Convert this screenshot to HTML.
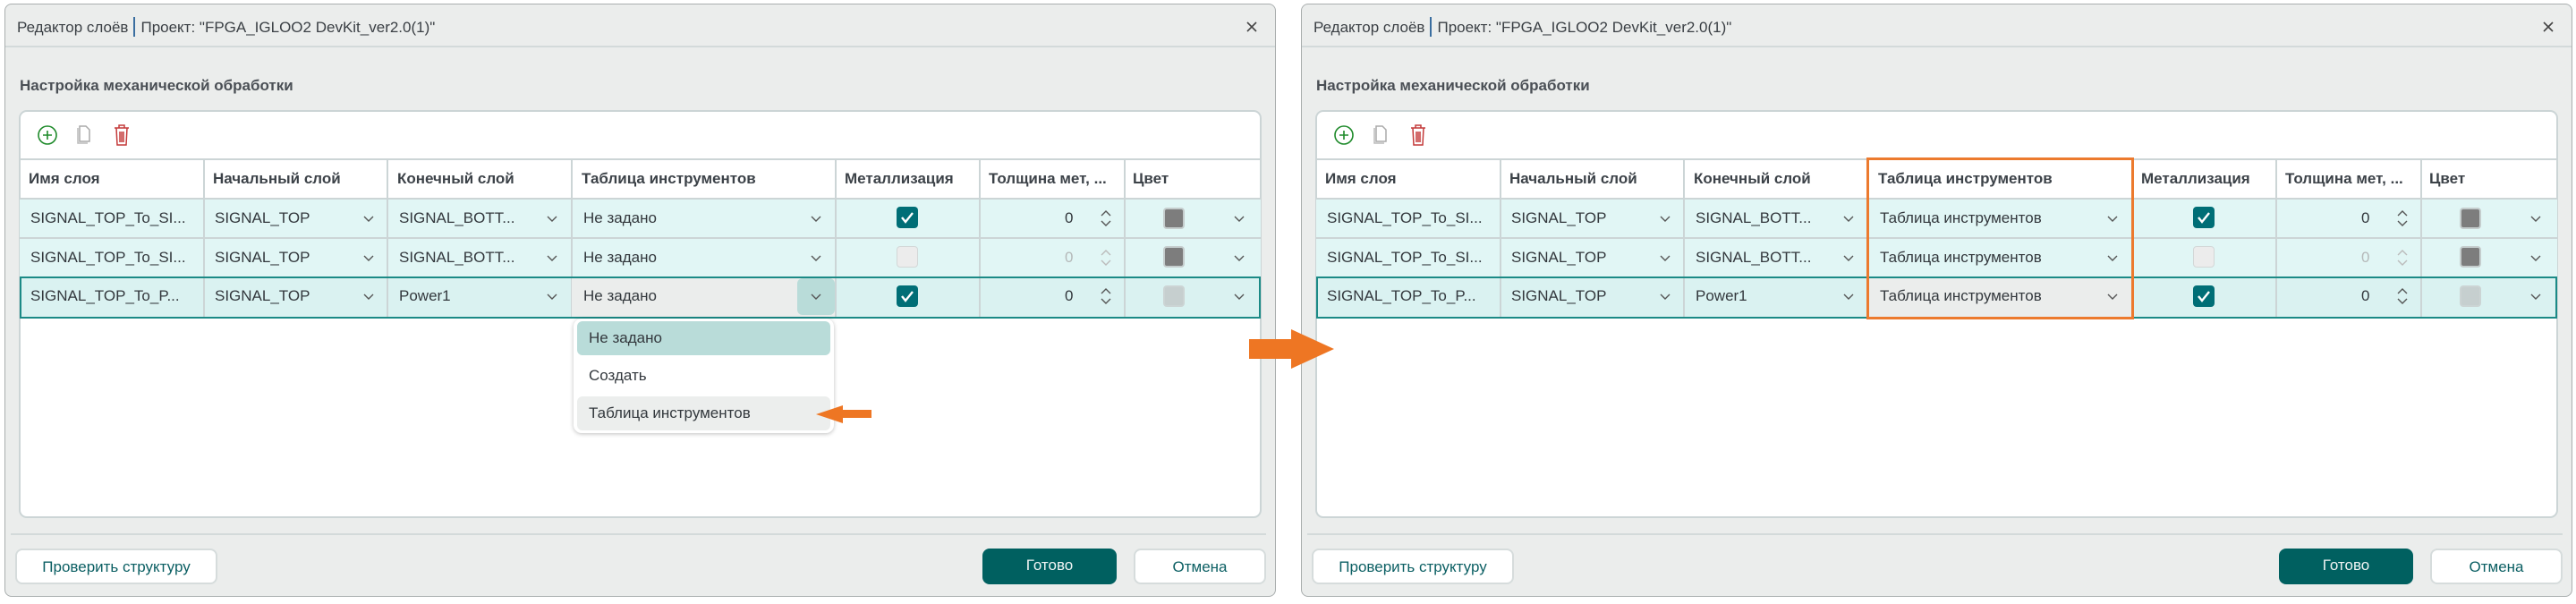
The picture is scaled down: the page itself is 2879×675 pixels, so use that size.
<!DOCTYPE html>
<html><head><meta charset="utf-8">
<style>
*{box-sizing:border-box;margin:0;padding:0}
body{width:2879px;height:675px;background:#fff;position:relative;overflow:hidden;font-family:"Liberation Sans","Noto Sans CJK SC",sans-serif;color:#33383d}
.d{position:absolute;top:0;width:1440px;height:675px}
.a{position:absolute}
.dlg{left:5px;top:4px;width:1421px;height:663px;background:#ebedec;border:1px solid #a9aeae;border-radius:8px}
.tl{left:19px;top:19px;font-size:17px;color:#3a3f44;white-space:nowrap}
.tl span{display:inline-block;width:2px;height:22px;background:#3a6ea0;vertical-align:-5px;margin:0 6px}
.hl{left:6px;top:51px;width:1419px;height:2px;background:#d3dada}
.h2{left:22px;top:86px;font-size:17px;font-weight:bold;color:#4a4f55}
.pn{left:21px;top:123px;width:1389px;height:456px;background:#fff;border:2px solid #ccd5d6;border-radius:9px}
.hr{top:177px;height:2px;background:#ccd5d6}
.cell{position:absolute;font-size:17px;white-space:nowrap;line-height:20px}
.hd{font-weight:bold;color:#3c4248}
.row{position:absolute;left:22px;width:1387px;background:#e1f6f5}
.vl{position:absolute;width:2px;background:#ccd5d6}
.hz{position:absolute;height:2px;background:#ccd5d6;left:22px;width:1387px}
.ch{position:absolute;width:14px;height:8px}
.cb{position:absolute;width:24px;height:24px;border-radius:4px;background:#006e76}
.cb.off{background:#ececec;border:1px solid #d3d7d7}
.sw{position:absolute;width:24px;height:24px;border-radius:4px;background:#7d7d7d;border:2px solid #c5cdcd}
.btn{position:absolute;top:613px;height:40px;border-radius:8px;font-size:17px;text-align:center;line-height:38px}
.ft{left:12px;top:596px;width:1403px;height:2px;background:#d3dada}
</style></head><body>

<!-- LEFT DIALOG -->
<div class="d" style="left:0">
<div class="a dlg"></div>
<div class="a tl">Редактор слоёв<span></span>Проект: "FPGA_IGLOO2 DevKit_ver2.0(1)"</div>
<svg class="a" style="left:1392px;top:23px" width="14" height="14"><path d="M2 2L12 12M12 2L2 12" stroke="#444" stroke-width="1.6"/></svg>
<div class="a hl"></div>
<div class="a h2">Настройка механической обработки</div>
<div class="a pn"></div>
<svg class="a" style="left:41px;top:139px" width="24" height="24"><circle cx="12" cy="12" r="10" fill="none" stroke="#1e8a2a" stroke-width="1.6"/><path d="M12 7v10M7 12h10" stroke="#1e8a2a" stroke-width="1.6"/></svg>
<svg class="a" style="left:84px;top:139px" width="20" height="24"><path d="M3 4v17h11" fill="none" stroke="#bbb" stroke-width="1.5"/><path d="M5 2h7l4 4v13H5z" fill="#fff" stroke="#aaa" stroke-width="1.5"/></svg>
<svg class="a" style="left:126px;top:138px" width="20" height="26"><path d="M2 5h16M7 5V2h6v3M4 5l1 19h10l1-19M8 9v12M10 9v12M12 9v12" fill="none" stroke="#c43a3a" stroke-width="1.5"/></svg>
<!-- table -->
<div class="hz" style="top:177px"></div>
<div class="row" style="top:223px;height:44px"></div>
<div class="row" style="top:267px;height:43px"></div>
<div class="row" style="top:310px;height:45px;background:#daf2f1"></div>
<div class="hz" style="top:221px"></div>
<div class="hz" style="top:265px"></div>
<div class="vl" style="left:227px;top:177px;height:178px"></div>
<div class="vl" style="left:432px;top:177px;height:178px"></div>
<div class="vl" style="left:638px;top:177px;height:178px"></div>
<div class="vl" style="left:933px;top:177px;height:178px"></div>
<div class="vl" style="left:1094px;top:177px;height:178px"></div>
<div class="vl" style="left:1256px;top:177px;height:178px"></div>
<div class="a" style="left:639px;top:311px;width:294px;height:43px;background:#ebedec"></div>
<div class="a" style="left:891px;top:311px;width:42px;height:41px;background:#b9dcd9;border-radius:6px"></div>
<div class="a" style="left:22px;top:309px;width:1387px;height:47px;border:2px solid #1b8a86"></div>
<div class="cell hd" style="left:32px;top:190px">Имя слоя</div>
<div class="cell hd" style="left:238px;top:190px">Начальный слой</div>
<div class="cell hd" style="left:444px;top:190px">Конечный слой</div>
<div class="cell hd" style="left:650px;top:190px">Таблица инструментов</div>
<div class="cell hd" style="left:944px;top:190px">Металлизация</div>
<div class="cell hd" style="left:1105px;top:190px">Толщина мет, ...</div>
<div class="cell hd" style="left:1266px;top:190px">Цвет</div>

<div class="cell" style="left:34px;top:234px">SIGNAL_TOP_To_SI...</div>
<div class="cell" style="left:34px;top:278px">SIGNAL_TOP_To_SI...</div>
<div class="cell" style="left:34px;top:321px">SIGNAL_TOP_To_P...</div>
<div class="cell" style="left:240px;top:234px">SIGNAL_TOP</div>
<div class="cell" style="left:240px;top:278px">SIGNAL_TOP</div>
<div class="cell" style="left:240px;top:321px">SIGNAL_TOP</div>
<div class="cell" style="left:446px;top:234px">SIGNAL_BOTT...</div>
<div class="cell" style="left:446px;top:278px">SIGNAL_BOTT...</div>
<div class="cell" style="left:446px;top:321px">Power1</div>
<div class="cell" style="left:652px;top:234px">Не задано</div>
<div class="cell" style="left:652px;top:278px">Не задано</div>
<div class="cell" style="left:652px;top:321px">Не задано</div>
<svg class="ch" style="left:405px;top:241px"><path d="M2 1l5 5 5-5" fill="none" stroke="#555" stroke-width="1.4"/></svg>
<svg class="ch" style="left:405px;top:285px"><path d="M2 1l5 5 5-5" fill="none" stroke="#555" stroke-width="1.4"/></svg>
<svg class="ch" style="left:405px;top:328px"><path d="M2 1l5 5 5-5" fill="none" stroke="#555" stroke-width="1.4"/></svg>
<svg class="ch" style="left:610px;top:241px"><path d="M2 1l5 5 5-5" fill="none" stroke="#555" stroke-width="1.4"/></svg>
<svg class="ch" style="left:610px;top:285px"><path d="M2 1l5 5 5-5" fill="none" stroke="#555" stroke-width="1.4"/></svg>
<svg class="ch" style="left:610px;top:328px"><path d="M2 1l5 5 5-5" fill="none" stroke="#555" stroke-width="1.4"/></svg>
<svg class="ch" style="left:905px;top:241px"><path d="M2 1l5 5 5-5" fill="none" stroke="#555" stroke-width="1.4"/></svg>
<svg class="ch" style="left:905px;top:285px"><path d="M2 1l5 5 5-5" fill="none" stroke="#555" stroke-width="1.4"/></svg>
<svg class="ch" style="left:905px;top:328px"><path d="M2 1l5 5 5-5" fill="none" stroke="#555" stroke-width="1.4"/></svg>
<div class="cb" style="left:1002px;top:231px"></div>
<svg class="a" style="left:1002px;top:231px" width="24" height="24"><path d="M6 12l4 5 8-10" fill="none" stroke="#fff" stroke-width="2.4"/></svg>
<div class="cb off" style="left:1002px;top:275px"></div>
<div class="cb" style="left:1002px;top:319px"></div>
<svg class="a" style="left:1002px;top:319px" width="24" height="24"><path d="M6 12l4 5 8-10" fill="none" stroke="#fff" stroke-width="2.4"/></svg>
<div class="cell" style="left:1190px;top:234px">0</div>
<div class="cell" style="left:1190px;top:278px;color:#b5b9b9">0</div>
<div class="cell" style="left:1190px;top:321px">0</div>
<svg class="a" style="left:1228px;top:233px" width="16" height="22"><path d="M3 8l5-5 5 5M3 14l5 5 5-5" fill="none" stroke="#555" stroke-width="1.4"/></svg>
<svg class="a" style="left:1228px;top:277px" width="16" height="22"><path d="M3 8l5-5 5 5M3 14l5 5 5-5" fill="none" stroke="#bbb" stroke-width="1.4"/></svg>
<svg class="a" style="left:1228px;top:320px" width="16" height="22"><path d="M3 8l5-5 5 5M3 14l5 5 5-5" fill="none" stroke="#555" stroke-width="1.4"/></svg>
<div class="sw" style="left:1300px;top:232px"></div>
<div class="sw" style="left:1300px;top:275px"></div>
<div class="sw" style="left:1300px;top:319px;background:#c6cfcf;border-color:#ccd4d4"></div>
<svg class="ch" style="left:1378px;top:241px"><path d="M2 1l5 5 5-5" fill="none" stroke="#555" stroke-width="1.4"/></svg>
<svg class="ch" style="left:1378px;top:285px"><path d="M2 1l5 5 5-5" fill="none" stroke="#555" stroke-width="1.4"/></svg>
<svg class="ch" style="left:1378px;top:328px"><path d="M2 1l5 5 5-5" fill="none" stroke="#555" stroke-width="1.4"/></svg>
<!-- dropdown -->
<div class="a" style="left:641px;top:356px;width:291px;height:128px;background:#fff;border-radius:9px;box-shadow:0 1px 5px rgba(0,0,0,.25)"></div>
<div class="a" style="left:645px;top:359px;width:283px;height:38px;background:#b9dcd9;border-radius:6px"></div>
<div class="a" style="left:645px;top:443px;width:283px;height:38px;background:#eceeed;border-radius:6px"></div>
<div class="cell" style="left:658px;top:368px">Не задано</div>
<div class="cell" style="left:658px;top:410px">Создать</div>
<div class="cell" style="left:658px;top:452px">Таблица инструментов</div>
<svg class="a" style="left:910px;top:450px" width="66" height="26"><path d="M2 13L32 3V8H64V17H32V23Z" fill="#ee7623"/></svg>
<!-- footer -->
<div class="a ft"></div>
<div class="btn" style="left:17px;width:226px;background:#fff;border:2px solid #d6dcdc;color:#0b5f63">Проверить структуру</div>
<div class="btn" style="left:1098px;width:150px;background:#006060;color:#f0f4f4">Готово</div>
<div class="btn" style="left:1267px;width:148px;background:#fff;border:2px solid #d6dcdc;color:#0b5f63">Отмена</div>
</div>

<!-- RIGHT DIALOG -->
<div class="d" style="left:1449px">
<div class="a dlg"></div>
<div class="a tl">Редактор слоёв<span></span>Проект: "FPGA_IGLOO2 DevKit_ver2.0(1)"</div>
<svg class="a" style="left:1392px;top:23px" width="14" height="14"><path d="M2 2L12 12M12 2L2 12" stroke="#444" stroke-width="1.6"/></svg>
<div class="a hl"></div>
<div class="a h2">Настройка механической обработки</div>
<div class="a pn"></div>
<svg class="a" style="left:41px;top:139px" width="24" height="24"><circle cx="12" cy="12" r="10" fill="none" stroke="#1e8a2a" stroke-width="1.6"/><path d="M12 7v10M7 12h10" stroke="#1e8a2a" stroke-width="1.6"/></svg>
<svg class="a" style="left:84px;top:139px" width="20" height="24"><path d="M3 4v17h11" fill="none" stroke="#bbb" stroke-width="1.5"/><path d="M5 2h7l4 4v13H5z" fill="#fff" stroke="#aaa" stroke-width="1.5"/></svg>
<svg class="a" style="left:126px;top:138px" width="20" height="26"><path d="M2 5h16M7 5V2h6v3M4 5l1 19h10l1-19M8 9v12M10 9v12M12 9v12" fill="none" stroke="#c43a3a" stroke-width="1.5"/></svg>
<div class="hz" style="top:177px"></div>
<div class="row" style="top:223px;height:44px"></div>
<div class="row" style="top:267px;height:43px"></div>
<div class="row" style="top:310px;height:45px;background:#daf2f1"></div>
<div class="hz" style="top:221px"></div>
<div class="hz" style="top:265px"></div>
<div class="vl" style="left:227px;top:177px;height:178px"></div>
<div class="vl" style="left:432px;top:177px;height:178px"></div>
<div class="vl" style="left:638px;top:177px;height:178px"></div>
<div class="vl" style="left:933px;top:177px;height:178px"></div>
<div class="vl" style="left:1094px;top:177px;height:178px"></div>
<div class="vl" style="left:1256px;top:177px;height:178px"></div>
<div class="a" style="left:639px;top:311px;width:294px;height:43px;background:#ebedec"></div>
<div class="a" style="left:22px;top:309px;width:1387px;height:47px;border:2px solid #1b8a86"></div>
<div class="a" style="left:637px;top:176px;width:299px;height:181px;border:3px solid #ec7a2e"></div>
<div class="cell hd" style="left:32px;top:190px">Имя слоя</div>
<div class="cell hd" style="left:238px;top:190px">Начальный слой</div>
<div class="cell hd" style="left:444px;top:190px">Конечный слой</div>
<div class="cell hd" style="left:650px;top:190px">Таблица инструментов</div>
<div class="cell hd" style="left:944px;top:190px">Металлизация</div>
<div class="cell hd" style="left:1105px;top:190px">Толщина мет, ...</div>
<div class="cell hd" style="left:1266px;top:190px">Цвет</div>
<div class="cell" style="left:34px;top:234px">SIGNAL_TOP_To_SI...</div>
<div class="cell" style="left:34px;top:278px">SIGNAL_TOP_To_SI...</div>
<div class="cell" style="left:34px;top:321px">SIGNAL_TOP_To_P...</div>
<div class="cell" style="left:240px;top:234px">SIGNAL_TOP</div>
<div class="cell" style="left:240px;top:278px">SIGNAL_TOP</div>
<div class="cell" style="left:240px;top:321px">SIGNAL_TOP</div>
<div class="cell" style="left:446px;top:234px">SIGNAL_BOTT...</div>
<div class="cell" style="left:446px;top:278px">SIGNAL_BOTT...</div>
<div class="cell" style="left:446px;top:321px">Power1</div>
<div class="cell" style="left:652px;top:234px">Таблица инструментов</div>
<div class="cell" style="left:652px;top:278px">Таблица инструментов</div>
<div class="cell" style="left:652px;top:321px">Таблица инструментов</div>
<svg class="ch" style="left:405px;top:241px"><path d="M2 1l5 5 5-5" fill="none" stroke="#555" stroke-width="1.4"/></svg>
<svg class="ch" style="left:405px;top:285px"><path d="M2 1l5 5 5-5" fill="none" stroke="#555" stroke-width="1.4"/></svg>
<svg class="ch" style="left:405px;top:328px"><path d="M2 1l5 5 5-5" fill="none" stroke="#555" stroke-width="1.4"/></svg>
<svg class="ch" style="left:610px;top:241px"><path d="M2 1l5 5 5-5" fill="none" stroke="#555" stroke-width="1.4"/></svg>
<svg class="ch" style="left:610px;top:285px"><path d="M2 1l5 5 5-5" fill="none" stroke="#555" stroke-width="1.4"/></svg>
<svg class="ch" style="left:610px;top:328px"><path d="M2 1l5 5 5-5" fill="none" stroke="#555" stroke-width="1.4"/></svg>
<svg class="ch" style="left:905px;top:241px"><path d="M2 1l5 5 5-5" fill="none" stroke="#555" stroke-width="1.4"/></svg>
<svg class="ch" style="left:905px;top:285px"><path d="M2 1l5 5 5-5" fill="none" stroke="#555" stroke-width="1.4"/></svg>
<svg class="ch" style="left:905px;top:328px"><path d="M2 1l5 5 5-5" fill="none" stroke="#555" stroke-width="1.4"/></svg>
<div class="cb" style="left:1002px;top:231px"></div>
<svg class="a" style="left:1002px;top:231px" width="24" height="24"><path d="M6 12l4 5 8-10" fill="none" stroke="#fff" stroke-width="2.4"/></svg>
<div class="cb off" style="left:1002px;top:275px"></div>
<div class="cb" style="left:1002px;top:319px"></div>
<svg class="a" style="left:1002px;top:319px" width="24" height="24"><path d="M6 12l4 5 8-10" fill="none" stroke="#fff" stroke-width="2.4"/></svg>
<div class="cell" style="left:1190px;top:234px">0</div>
<div class="cell" style="left:1190px;top:278px;color:#b5b9b9">0</div>
<div class="cell" style="left:1190px;top:321px">0</div>
<svg class="a" style="left:1228px;top:233px" width="16" height="22"><path d="M3 8l5-5 5 5M3 14l5 5 5-5" fill="none" stroke="#555" stroke-width="1.4"/></svg>
<svg class="a" style="left:1228px;top:277px" width="16" height="22"><path d="M3 8l5-5 5 5M3 14l5 5 5-5" fill="none" stroke="#bbb" stroke-width="1.4"/></svg>
<svg class="a" style="left:1228px;top:320px" width="16" height="22"><path d="M3 8l5-5 5 5M3 14l5 5 5-5" fill="none" stroke="#555" stroke-width="1.4"/></svg>
<div class="sw" style="left:1300px;top:232px"></div>
<div class="sw" style="left:1300px;top:275px"></div>
<div class="sw" style="left:1300px;top:319px;background:#c6cfcf;border-color:#ccd4d4"></div>
<svg class="ch" style="left:1378px;top:241px"><path d="M2 1l5 5 5-5" fill="none" stroke="#555" stroke-width="1.4"/></svg>
<svg class="ch" style="left:1378px;top:285px"><path d="M2 1l5 5 5-5" fill="none" stroke="#555" stroke-width="1.4"/></svg>
<svg class="ch" style="left:1378px;top:328px"><path d="M2 1l5 5 5-5" fill="none" stroke="#555" stroke-width="1.4"/></svg>
<div class="a ft"></div>
<div class="btn" style="left:17px;width:226px;background:#fff;border:2px solid #d6dcdc;color:#0b5f63">Проверить структуру</div>
<div class="btn" style="left:1098px;width:150px;background:#006060;color:#f0f4f4">Готово</div>
<div class="btn" style="left:1267px;width:148px;background:#fff;border:2px solid #d6dcdc;color:#0b5f63">Отмена</div>
</div>

<!-- big arrow -->
<svg class="a" style="left:1394px;top:366px" width="100" height="48"><path d="M2 13H49V2L97 24L49 46V35H2Z" fill="#ee7623"/></svg>
</body></html>
